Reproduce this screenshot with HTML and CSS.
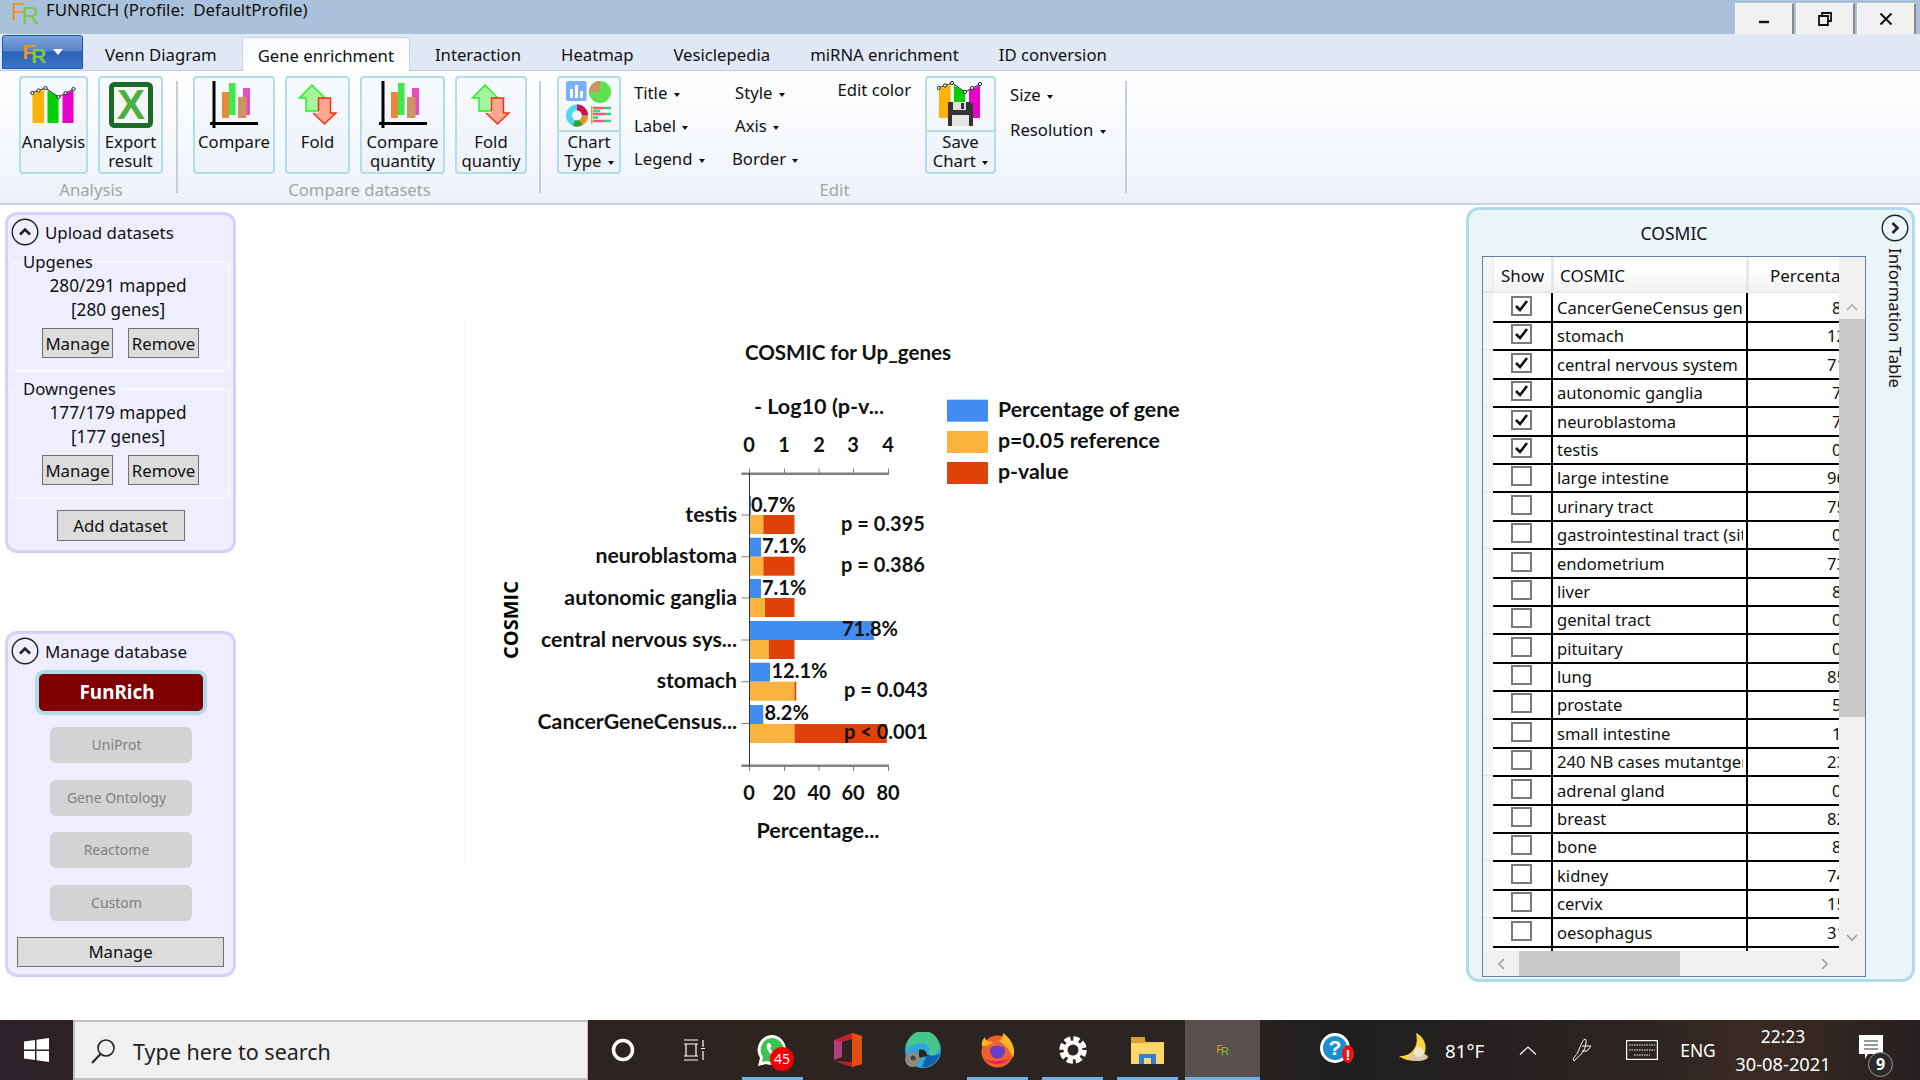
FILE: index.html
```html
<!DOCTYPE html>
<html>
<head>
  <title>FUNRICH</title>
  <link rel="stylesheet" href="styles.css">
</head>
<body>
  <!-- shared icons -->
  <svg class="defs">
    <symbol id="i-analysis" viewBox="0 0 46 38">
      <polygon points="2,8 13.6,3.5 13.6,37 2,37" fill="#ffb400"/>
      <polygon points="17,4.5 28,11 28,37 17,37" fill="#00d000"/>
      <polygon points="32,9.5 43,4 43,37 32,37" fill="#e600c8"/>
      <polyline points="1,7 15,2 28,11 43,3" fill="none" stroke="#222" stroke-width="1"/>
      <g fill="#fff" stroke="#222" stroke-width="1">
        <circle cx="1.8" cy="7" r="1.6"/><circle cx="8" cy="4.5" r="1.6"/><circle cx="15" cy="2" r="1.6"/>
        <circle cx="28" cy="11" r="1.6"/><circle cx="35" cy="7" r="1.6"/><circle cx="43" cy="3" r="1.6"/>
      </g>
    </symbol>
    <symbol id="i-compare" viewBox="0 0 50 48">
      <rect x="13" y="11" width="7" height="26" fill="#e88a3a"/>
      <rect x="20" y="2" width="6.5" height="32" fill="#3ee84a"/>
      <rect x="34" y="7" width="7" height="27" fill="#e64dc0"/>
      <rect x="29" y="16" width="8.5" height="21" fill="#cc9460"/>
      <path d="M5 0V47M1 42.5H49" fill="none" stroke="#000" stroke-width="3"/>
    </symbol>
    <symbol id="i-fold" viewBox="0 0 40 42">
      <polygon points="14,1 27,14 21,14 21,27 8,27 8,14 1.5,14" fill="#a5f5a0" stroke="#20ee20" stroke-width="1.4"/>
      <polygon points="20.5,14 32.5,14 32.5,29 38,29 26.5,40 15,29 20.5,29" fill="#ffa590"/>
      <path d="M20.5 27V14H32.5V29H38L26.5 40L15 29" fill="none" stroke="#f03010" stroke-width="1.4"/>
    </symbol>
  </svg>

  <div class="titlebar">
    <span class="fr fr-big"><span class="fr-f">F</span><span class="fr-r">R</span></span>
    <span class="title-text">FUNRICH (Profile:&nbsp; DefaultProfile)</span>
    <div class="win-btns">
      <div class="win-btn"><svg width="12" height="12" viewBox="0 0 12 12"><path d="M1 9H11" stroke="#111" stroke-width="2.4"/></svg></div>
      <div class="win-btn"><svg width="14" height="14" viewBox="0 0 14 14"><path d="M4 4V1H13V9H10M1 4H10V13H1Z" fill="none" stroke="#111" stroke-width="1.8"/></svg></div>
      <div class="win-btn"><svg width="14" height="14" viewBox="0 0 14 14"><path d="M1.5 1.5L12.5 12.5M12.5 1.5L1.5 12.5" stroke="#111" stroke-width="2"/></svg></div>
    </div>
  </div>

  <div class="tabbar">
    <div class="app-btn">
      <span class="fr fr-mid"><span class="fr-f">F</span><span class="fr-r">R</span></span>
      <span class="caret caret-white"></span>
    </div>
    <div class="tabs">
      <a class="tab">Venn Diagram</a>
      <a class="tab tab-active">Gene enrichment</a>
      <a class="tab">Interaction</a>
      <a class="tab">Heatmap</a>
      <a class="tab">Vesiclepedia</a>
      <a class="tab">miRNA enrichment</a>
      <a class="tab">ID conversion</a>
    </div>
  </div>

  <div class="ribbon">
    <div class="rgroup rgroup-analysis">
      <div class="rrow">
        <div class="rbtn w-analysis">
          <div class="rbtn-icon"><svg width="47" height="38"><use href="#i-analysis"/></svg></div>
          <div class="rbtn-text">Analysis</div>
        </div>
        <div class="rbtn w-export">
          <div class="rbtn-icon">
            <svg width="44" height="46" viewBox="0 0 44 46">
              <rect x="2.5" y="2.5" width="39" height="41" rx="3" fill="#f4f6f4" stroke="#1d6b2b" stroke-width="5"/>
              <text x="22" y="37" class="excel-x">X</text>
            </svg>
          </div>
          <div class="rbtn-text">Export<br>result</div>
        </div>
      </div>
      <div class="rlabel">Analysis</div>
    </div>
    <div class="rsep"></div>

    <div class="rgroup rgroup-compare">
      <div class="rrow">
        <div class="rbtn w-compare">
          <div class="rbtn-icon"><svg width="50" height="48"><use href="#i-compare"/></svg></div>
          <div class="rbtn-text">Compare</div>
        </div>
        <div class="rbtn w-fold">
          <div class="rbtn-icon"><svg width="40" height="42"><use href="#i-fold"/></svg></div>
          <div class="rbtn-text">Fold</div>
        </div>
        <div class="rbtn w-cquant">
          <div class="rbtn-icon"><svg width="50" height="48"><use href="#i-compare"/></svg></div>
          <div class="rbtn-text">Compare<br>quantity</div>
        </div>
        <div class="rbtn w-fquant">
          <div class="rbtn-icon"><svg width="40" height="42"><use href="#i-fold"/></svg></div>
          <div class="rbtn-text">Fold<br>quantiy</div>
        </div>
      </div>
      <div class="rlabel">Compare datasets</div>
    </div>
    <div class="rsep"></div>

    <div class="rgroup rgroup-edit">
      <div class="rrow">
        <div class="rbtn rbtn-split w-chart">
          <div class="rbtn-icon">
            <svg width="46" height="46" viewBox="0 0 46 46">
              <rect x="0" y="0" width="20.5" height="20" rx="2" fill="#7ab0f5"/>
              <path d="M4 17V8H7V17ZM9 17V4H12V17ZM14 17V10H17V17Z" fill="#fff"/>
              <circle cx="34" cy="11" r="11" fill="#5ee050"/>
              <path d="M34 11V0A11 11 0 0 0 23 11Z" fill="#cc9460"/>
              <circle cx="11" cy="34.5" r="8" fill="none" stroke="#4dd8f0" stroke-width="6"/>
              <path d="M11 26.5A8 8 0 0 1 19 34.5" fill="none" stroke="#d01050" stroke-width="6"/>
              <path d="M19 34.5A8 8 0 0 1 15 41.5" fill="none" stroke="#f09020" stroke-width="6"/>
              <path d="M15 41.5A8 8 0 0 1 8 42" fill="none" stroke="#30a030" stroke-width="6"/>
              <rect x="25" y="25" width="1.5" height="18" fill="#c8b020"/>
              <path d="M27 27H38M27 33H40M27 40H38" stroke="#e8607a" stroke-width="2.5"/>
              <path d="M38 27H45M40 33H45M38 40H45M27 30H34M27 36.5H32" stroke="#30d878" stroke-width="2.5"/>
            </svg>
          </div>
          <div class="rbtn-text">Chart<br>Type <span class="caret"></span></div>
        </div>
        <div class="menu-col col-a">
          <div class="menu-item">Title <span class="caret"></span></div>
          <div class="menu-item">Label <span class="caret"></span></div>
          <div class="menu-item">Legend <span class="caret"></span></div>
        </div>
        <div class="menu-col col-b">
          <div class="menu-item nudge">Style <span class="caret"></span></div>
          <div class="menu-item nudge">Axis <span class="caret"></span></div>
          <div class="menu-item">Border <span class="caret"></span></div>
        </div>
        <div class="edit-color">Edit color</div>
        <div class="rbtn rbtn-split w-save">
          <div class="rbtn-icon">
            <svg width="47" height="46" viewBox="0 0 47 46">
              <use href="#i-analysis" width="46" height="38" y="0"/>
              <path d="M11 21H33L36 24V45H11Z" fill="#333"/>
              <rect x="16" y="21" width="13" height="8" fill="#ddd"/>
              <rect x="24" y="22" width="3" height="6" fill="#333"/>
              <rect x="15" y="34" width="17" height="11" fill="#e6e6e6"/>
            </svg>
          </div>
          <div class="rbtn-text">Save<br>Chart <span class="caret"></span></div>
        </div>
        <div class="menu-col col-c">
          <div class="menu-item">Size <span class="caret"></span></div>
          <div class="menu-item">Resolution <span class="caret"></span></div>
        </div>
      </div>
      <div class="rlabel">Edit</div>
    </div>
    <div class="rsep"></div>
  </div>

  <div class="main">
    <div class="side">
      <div class="panel panel-upload">
        <div class="panel-head">
          <svg class="round-btn" width="28" height="28" viewBox="0 0 28 28"><circle cx="14" cy="14" r="12.8" fill="none" stroke="#222" stroke-width="1.4"/><path d="M9 16.5L14 11.5L19 16.5" fill="none" stroke="#222" stroke-width="2.6"/></svg>
          <span>Upload datasets</span>
        </div>
        <div class="group">
          <div class="group-title">Upgenes</div>
          <div class="group-line">280/291 mapped</div>
          <div class="group-line">[280 genes]</div>
          <div class="group-btns"><button class="btn btn-small">Manage</button><button class="btn btn-small">Remove</button></div>
        </div>
        <div class="group group-second">
          <div class="group-title">Downgenes</div>
          <div class="group-line">177/179 mapped</div>
          <div class="group-line">[177 genes]</div>
          <div class="group-btns"><button class="btn btn-small">Manage</button><button class="btn btn-small">Remove</button></div>
        </div>
        <button class="btn btn-add">Add dataset</button>
      </div>

      <div class="panel panel-db">
        <div class="panel-head">
          <svg class="round-btn" width="28" height="28" viewBox="0 0 28 28"><circle cx="14" cy="14" r="12.8" fill="none" stroke="#222" stroke-width="1.4"/><path d="M9 16.5L14 11.5L19 16.5" fill="none" stroke="#222" stroke-width="2.6"/></svg>
          <span>Manage database</span>
        </div>
        <div class="db-active">FunRich</div>
        <div class="db-off">UniProt</div>
        <div class="db-off">Gene Ontology</div>
        <div class="db-off">Reactome</div>
        <div class="db-off">Custom</div>
        <button class="btn btn-manage">Manage</button>
      </div>
    </div>

    <div class="chart-area">
      <svg class="chart" width="1231" height="815" viewBox="235 205 1231 815">
        <line x1="465" y1="320" x2="465" y2="865" stroke="#f2f2f2" stroke-width="1"/>

        <text x="848" y="360" class="ct ct-mid ct-title">COSMIC for Up_genes</text>
        <text x="819" y="414" class="ct ct-mid ct-axis">- Log10 (p-v...</text>

        <g class="ct ct-mid">
          <text x="749" y="452">0</text><text x="784" y="452">1</text><text x="819" y="452">2</text><text x="853" y="452">3</text><text x="888" y="452">4</text>
          <text x="749" y="800">0</text><text x="784" y="800">20</text><text x="819" y="800">40</text><text x="853" y="800">60</text><text x="888" y="800">80</text>
        </g>
        <text x="818" y="838" class="ct ct-mid ct-axis">Percentage...</text>

        <!-- bars -->
        <g fill="#418cf0">
          <rect x="749.5" y="496" width="1.5" height="19"/>
          <rect x="749.5" y="537.7" width="11.5" height="19"/>
          <rect x="749.5" y="579" width="11.5" height="19"/>
          <rect x="749.5" y="621" width="124.5" height="19"/>
          <rect x="749.5" y="662.7" width="20.5" height="19"/>
          <rect x="749.5" y="705" width="13.8" height="19"/>
        </g>
        <g fill="#fbb33f">
          <rect x="749.5" y="515" width="13.8" height="19"/>
          <rect x="749.5" y="556.7" width="13.8" height="19"/>
          <rect x="749.5" y="598" width="15.5" height="19"/>
          <rect x="749.5" y="640" width="19.3" height="19"/>
          <rect x="749.5" y="681.7" width="45" height="19"/>
          <rect x="749.5" y="724" width="45" height="19"/>
        </g>
        <g fill="#e0400a">
          <rect x="763.3" y="515" width="31.2" height="19"/>
          <rect x="763.3" y="556.7" width="31.2" height="19"/>
          <rect x="765" y="598" width="29.5" height="19"/>
          <rect x="768.8" y="640" width="25.7" height="19"/>
          <rect x="794.5" y="681.7" width="1.8" height="19"/>
          <rect x="794.5" y="724" width="92.3" height="19"/>
        </g>

        <!-- axes -->
        <g stroke="#808080" fill="none">
          <path d="M741.5 473.7H889M741.5 765.7H889" stroke-width="2.4"/>
          <path d="M749.5 468.5V473M784.5 468.5V473M819 468.5V473M853.5 468.5V473M888.5 468.5V473" stroke-width="1"/>
          <path d="M749.5 766V771M784.5 766V771M819 766V771M853.5 766V771M888.5 766V771" stroke-width="1"/>
          <path d="M741.5 515H749M741.5 556.7H749M741.5 598H749M741.5 640H749M741.5 681.7H749M741.5 723.5H749" stroke-width="1"/>
        </g>
        <line x1="749.5" y1="473" x2="749.5" y2="766" stroke="#333" stroke-width="1"/>

        <g class="ct ct-end ct-lab">
          <text x="737" y="522">testis</text>
          <text x="737" y="563">neuroblastoma</text>
          <text x="737" y="605">autonomic ganglia</text>
          <text x="737" y="647">central nervous sys...</text>
          <text x="737" y="688">stomach</text>
          <text x="737" y="729">CancerGeneCensus...</text>
        </g>

        <g class="ct">
          <text x="751" y="512">0.7%</text>
          <text x="762" y="553">7.1%</text>
          <text x="762" y="595">7.1%</text>
          <text x="842" y="636">71.8%</text>
          <text x="771.5" y="678">12.1%</text>
          <text x="764.5" y="720">8.2%</text>
          <text x="841" y="531">p = 0.395</text>
          <text x="841" y="572">p = 0.386</text>
          <text x="844" y="697">p = 0.043</text>
          <text x="844" y="739">p &lt; 0.001</text>
        </g>

        <text x="510" y="620" class="ct-side" transform="rotate(-90 510 620)">COSMIC</text>

        <rect x="947" y="399.7" width="41" height="22" fill="#418cf0"/>
        <rect x="947" y="431" width="41" height="22" fill="#fbb33f"/>
        <rect x="947" y="462" width="41" height="22" fill="#e0400a"/>
        <g class="ct ct-lab">
          <text x="998" y="417">Percentage of gene</text>
          <text x="998" y="448">p=0.05 reference</text>
          <text x="998" y="479">p-value</text>
        </g>
      </svg>
    </div>

    <div class="info-panel">
      <div class="info-body">
        <div class="info-title">COSMIC</div>
        <div class="table">
          <div class="table-main">
            <div class="cols">
              <div class="row head">
                <div class="gutter"></div>
                <div class="hcell hcell-show">Show</div>
                <div class="hcell hcell-name">COSMIC</div>
                <div class="hcell hcell-pct">Percentage</div>
              </div>
              <div class="rows">
                <div class="row"><div class="gutter"></div><div class="c-show"><span class="check on"></span></div><div class="c-name"><div>CancerGeneCensus genes</div></div><div class="c-pct one">8.2</div></div>
                <div class="row"><div class="gutter"></div><div class="c-show"><span class="check on"></span></div><div class="c-name"><div>stomach</div></div><div class="c-pct">12.1</div></div>
                <div class="row"><div class="gutter"></div><div class="c-show"><span class="check on"></span></div><div class="c-name"><div>central nervous system</div></div><div class="c-pct">71.8</div></div>
                <div class="row"><div class="gutter"></div><div class="c-show"><span class="check on"></span></div><div class="c-name"><div>autonomic ganglia</div></div><div class="c-pct one">7.1</div></div>
                <div class="row"><div class="gutter"></div><div class="c-show"><span class="check on"></span></div><div class="c-name"><div>neuroblastoma</div></div><div class="c-pct one">7.1</div></div>
                <div class="row"><div class="gutter"></div><div class="c-show"><span class="check on"></span></div><div class="c-name"><div>testis</div></div><div class="c-pct one">0.7</div></div>
                <div class="row"><div class="gutter"></div><div class="c-show"><span class="check"></span></div><div class="c-name"><div>large intestine</div></div><div class="c-pct">96</div></div>
                <div class="row"><div class="gutter"></div><div class="c-show"><span class="check"></span></div><div class="c-name"><div>urinary tract</div></div><div class="c-pct">75</div></div>
                <div class="row"><div class="gutter"></div><div class="c-show"><span class="check"></span></div><div class="c-name"><div>gastrointestinal tract (site)</div></div><div class="c-pct one">0</div></div>
                <div class="row"><div class="gutter"></div><div class="c-show"><span class="check"></span></div><div class="c-name"><div>endometrium</div></div><div class="c-pct">73</div></div>
                <div class="row"><div class="gutter"></div><div class="c-show"><span class="check"></span></div><div class="c-name"><div>liver</div></div><div class="c-pct one">8</div></div>
                <div class="row"><div class="gutter"></div><div class="c-show"><span class="check"></span></div><div class="c-name"><div>genital tract</div></div><div class="c-pct one">0</div></div>
                <div class="row"><div class="gutter"></div><div class="c-show"><span class="check"></span></div><div class="c-name"><div>pituitary</div></div><div class="c-pct one">0</div></div>
                <div class="row"><div class="gutter"></div><div class="c-show"><span class="check"></span></div><div class="c-name"><div>lung</div></div><div class="c-pct">85</div></div>
                <div class="row"><div class="gutter"></div><div class="c-show"><span class="check"></span></div><div class="c-name"><div>prostate</div></div><div class="c-pct one">5</div></div>
                <div class="row"><div class="gutter"></div><div class="c-show"><span class="check"></span></div><div class="c-name"><div>small intestine</div></div><div class="c-pct one">1</div></div>
                <div class="row"><div class="gutter"></div><div class="c-show"><span class="check"></span></div><div class="c-name"><div>240 NB cases mutantgenes</div></div><div class="c-pct">23</div></div>
                <div class="row"><div class="gutter"></div><div class="c-show"><span class="check"></span></div><div class="c-name"><div>adrenal gland</div></div><div class="c-pct one">0</div></div>
                <div class="row"><div class="gutter"></div><div class="c-show"><span class="check"></span></div><div class="c-name"><div>breast</div></div><div class="c-pct">82</div></div>
                <div class="row"><div class="gutter"></div><div class="c-show"><span class="check"></span></div><div class="c-name"><div>bone</div></div><div class="c-pct one">8</div></div>
                <div class="row"><div class="gutter"></div><div class="c-show"><span class="check"></span></div><div class="c-name"><div>kidney</div></div><div class="c-pct">74</div></div>
                <div class="row"><div class="gutter"></div><div class="c-show"><span class="check"></span></div><div class="c-name"><div>cervix</div></div><div class="c-pct">15</div></div>
                <div class="row"><div class="gutter"></div><div class="c-show"><span class="check"></span></div><div class="c-name"><div>oesophagus</div></div><div class="c-pct">31</div></div>
                <div class="row"><div class="gutter"></div><div class="c-show"></div><div class="c-name"></div><div class="c-pct"></div></div>
              </div>
            </div>
            <div class="vbar">
              <div class="vbar-top"><svg width="12" height="8" viewBox="0 0 12 8"><path d="M1 7L6 2L11 7" fill="none" stroke="#b0b0b0" stroke-width="1.6"/></svg></div>
              <div class="vbar-thumb"></div>
              <div class="vbar-end"><svg width="12" height="8" viewBox="0 0 12 8"><path d="M1 1L6 6L11 1" fill="none" stroke="#a0a0a0" stroke-width="1.6"/></svg></div>
            </div>
          </div>
          <div class="hbar">
            <div class="hbar-start"><svg width="8" height="12" viewBox="0 0 8 12"><path d="M7 1L2 6L7 11" fill="none" stroke="#a0a0a0" stroke-width="1.6"/></svg></div>
            <div class="hbar-thumb"></div>
            <div class="hbar-end"><svg width="8" height="12" viewBox="0 0 8 12"><path d="M1 1L6 6L1 11" fill="none" stroke="#a0a0a0" stroke-width="1.6"/></svg></div>
          </div>
        </div>
      </div>
      <div class="info-rail">
        <svg width="28" height="28" viewBox="0 0 28 28"><circle cx="14" cy="14" r="12.8" fill="none" stroke="#222" stroke-width="1.4"/><path d="M11.5 9L16.5 14L11.5 19" fill="none" stroke="#222" stroke-width="2.6"/></svg>
        <div class="rail-text">Information Table</div>
      </div>
    </div>
  </div>

  <div class="taskbar">
    <div class="start">
      <svg width="25" height="24" viewBox="0 0 25 24"><path d="M0 3.5L11 2V11.5H0ZM12.5 1.8L25 0V11.5H12.5ZM0 13H11V22L0 20.5ZM12.5 13H25V24L12.5 22.3Z" fill="#fff"/></svg>
    </div>
    <div class="search">
      <svg width="26" height="26" viewBox="0 0 26 26"><circle cx="16" cy="10" r="8" fill="none" stroke="#222" stroke-width="1.6"/><path d="M10.5 16L2 25" stroke="#222" stroke-width="2"/></svg>
      <span>Type here to search</span>
    </div>
    <div class="sys-btn sys-cortana">
      <svg width="24" height="24" viewBox="0 0 24 24"><circle cx="12" cy="12" r="9.5" fill="none" stroke="#fff" stroke-width="3.5"/></svg>
    </div>
    <div class="sys-btn sys-view">
      <svg width="25" height="22" viewBox="0 0 25 22"><path d="M1 1H15M1 5H15M3 5V17M13 5V17M1 17H15M1 21H15M20 1V8M20 12V21M18 9.5H22" fill="none" stroke="#fff" stroke-width="1.2"/></svg>
    </div>
    <div class="app app-first on">
      <svg width="32" height="33" viewBox="0 0 32 33"><path d="M16 1A15 15 0 0 0 3 24L1 32L9 30A15 15 0 1 0 16 1Z" fill="#fff"/><path d="M16 4A12 12 0 0 0 6 23L5 28L10 27A12 12 0 1 0 16 4Z" fill="#3fc350"/><path d="M11 9C9 11 9 14 12 18C15 22 19 23 22 21L22 18L18.5 16.5L17 18C15 17 13.5 15.5 13 14L14.5 12.5L13 9Z" fill="#fff"/></svg>
      <span class="wa-badge">45</span>
    </div>
    <div class="app">
      <svg width="28" height="34" viewBox="0 0 28 34"><polygon points="0,7 18,0 28,3 28,31 18,34 0,28 18,29 18,6 8,9 8,24 0,27" fill="#c0202c"/><polygon points="18,0 28,3 28,31 18,34" fill="#e0500a"/><polygon points="0,7 8,9 8,24 0,27" fill="#b04080"/></svg>
    </div>
    <div class="app">
      <svg width="36" height="36" viewBox="0 0 36 36"><circle cx="18" cy="18" r="18" fill="#2fa8d8"/><path d="M2 18A16 16 0 0 1 34 12C36 22 26 25 22 22C27 19 24 10 15 11C9 12 4 14 2 18Z" fill="#46c58c"/><path d="M22 22C26 25 32 24 35 21C33 31 24 36 17 35Z" fill="#1060b0"/><path d="M14 18C20 16 22 21 22 24L14 26Z" fill="#2b2420"/><circle cx="7.5" cy="27.5" r="7.5" fill="#8f8a82"/><circle cx="8" cy="26" r="2.5" fill="#444"/></svg>
    </div>
    <div class="app on">
      <svg width="35" height="35" viewBox="0 0 35 35"><circle cx="17.5" cy="18.5" r="16" fill="#f2612a"/><path d="M23 0C33 7 36 17 33 25C29 14 22 10 19 8C22 6 23 4 23 0Z" fill="#fdb32b"/><path d="M2 13C1 8 4 5 5 4C5 8 9 9 14 9C9 12 5 14 2 13Z" fill="#fdb32b"/><path d="M5 26C10 33 26 33 31 24C27 28 14 30 5 26Z" fill="#e0246a"/><circle cx="17.5" cy="18" r="7.5" fill="#6a3ec8"/><path d="M10 14C13 10 20 10 24 14C20 12 14 12 10 14Z" fill="#f7882a"/></svg>
    </div>
    <div class="app on">
      <svg width="28" height="28" viewBox="0 0 28 28"><circle cx="14" cy="14" r="7.5" fill="none" stroke="#fff" stroke-width="4"/><circle cx="14" cy="14" r="11.5" fill="none" stroke="#fff" stroke-width="4.5" stroke-dasharray="6.2 2.83"/></svg>
    </div>
    <div class="app on">
      <svg width="33" height="27" viewBox="0 0 33 27"><path d="M0 2H13L15 5H33V27H0Z" fill="#f0c04a"/><rect x="0" y="0" width="14" height="6" fill="#d9a030"/><rect x="0" y="6" width="33" height="21" fill="#fad766"/><path d="M8 27V17H25V27H20V21H13V27Z" fill="#2f7fd8"/></svg>
    </div>
    <div class="app app-active">
      <span class="fr fr-small"><span class="fr-f">F</span><span class="fr-r">R</span></span>
    </div>

    <div class="tray">
      <div class="t-help">
        <svg width="35" height="32" viewBox="0 0 35 32"><circle cx="15" cy="16" r="15" fill="#fff"/><circle cx="15" cy="16" r="12" fill="#1a90cf"/><text x="15" y="23" class="help-q">?</text><ellipse cx="28" cy="22" rx="6" ry="9" fill="#f01010"/><text x="28" y="28" class="help-x">!</text></svg>
      </div>
      <div class="t-moon">
        <svg width="35" height="30" viewBox="0 0 35 30"><path d="M18 0C30 5 31 23 20 27C12 29 5 26 1 23C10 24 22 17 18 0Z" fill="#f8d838"/><ellipse cx="20" cy="24" rx="10" ry="4" fill="#d8c8a8"/><circle cx="21" cy="19" r="5" fill="#efe6c8"/></svg>
      </div>
      <div class="t-temp">81°F</div>
      <div class="t-icon t-chev"><svg width="18" height="9" viewBox="0 0 18 9"><path d="M1 8.5L9 1L17 8.5" fill="none" stroke="#fff" stroke-width="1.2"/></svg></div>
      <div class="t-icon t-pen"><svg width="20" height="24" viewBox="0 0 20 24"><path d="M2 23C0 20 4 18 6 14C8 9 11 1 13 1C15 1 14 8 12 12C10 16 6 19 2 23ZM10 8H19L15 13H10" fill="none" stroke="#fff" stroke-width="1"/></svg></div>
      <div class="t-icon t-kbd"><svg width="32" height="20" viewBox="0 0 32 20"><rect x=".6" y=".6" width="30.8" height="18.8" fill="none" stroke="#fff" stroke-width="1.2"/><path d="M3 5H29M3 10H29M8 15H24" stroke="#fff" stroke-width="1.2" stroke-dasharray="1.5 1"/></svg></div>
      <div class="t-lang">ENG</div>
      <div class="t-clock"><div>22:23</div><div class="t-date">30-08-2021</div></div>
      <div class="t-notif">
        <svg width="26" height="27" viewBox="0 0 26 27"><path d="M1 1H25V20H10L7 25V20H1Z" fill="#fff"/><path d="M6 7H20M6 11H20M6 15H20" stroke="#333" stroke-width="1.2"/></svg>
        <span class="notif-badge">9</span>
      </div>
    </div>
  </div>
</body>
</html>
```

FILE: styles.css
```css
* {
  box-sizing: border-box;
}

html, body {
  margin: 0;
  padding: 0;
}

body {
  width: 1920px;
  height: 1080px;
  overflow: hidden;
  display: flex;
  flex-direction: column;
  background-color: #FFFFFF;
  color: #111111;
  font-family: "Noto Sans", sans-serif;
  font-size: 16.7px;
}

.defs {
  display: none;
}

/* logo letters */
.fr {
  display: inline-flex;
  font-family: "Liberation Sans", sans-serif;
}

.fr-f {
  color: #f0902a;
}

.fr-r {
  color: #7cc83c;
  margin-left: -4px;
  position: relative;
  top: 4px;
}

.fr-big {
  font-size: 24px;
  margin-left: 11px;
  line-height: 24px;
  width: 35px;
}

.fr-mid {
  font-size: 21px;
  line-height: 22px;
  font-weight: bold;
}

.fr-small {
  font-size: 11px;
  line-height: 12px;
}

.fr-small .fr-r {
  margin-left: -2px;
  top: 2px;
}

.caret {
  display: inline-block;
  width: 0;
  height: 0;
  border-left: 3.5px solid transparent;
  border-right: 3.5px solid transparent;
  border-top: 4px solid #111111;
  vertical-align: middle;
  margin-left: 2px;
}

.caret-white {
  border-left-width: 5px;
  border-right-width: 5px;
  border-top: 6px solid #FFFFFF;
  margin-left: 6px;
}

/* title bar */
.titlebar {
  height: 34px;
  flex: none;
  display: flex;
  background-color: #a9c1db;
}

.title-text {
  font-size: 16.9px;
  line-height: 20px;
}

.win-btns {
  margin-left: auto;
  display: flex;
  align-items: flex-end;
  gap: 2px;
  padding-right: 4px;
}

.win-btn {
  width: 59px;
  height: 31px;
  display: flex;
  align-items: center;
  justify-content: center;
  background-color: #f0f0f0;
  border-top: 1px solid #fafafa;
  border-left: 1px solid #fafafa;
  border-right: 2px solid #8a8a8a;
}

/* tabs */
.tabbar {
  height: 37px;
  flex: none;
  display: flex;
  padding-left: 2px;
  background-color: #dfe8f4;
  border-bottom: 1px solid #b9cde2;
}

.app-btn {
  width: 81px;
  height: 34px;
  margin-top: 1px;
  display: flex;
  align-items: center;
  justify-content: center;
  border: 1px solid #1a58b8;
  border-radius: 3px 3px 0 0;
  background: linear-gradient(#7fa2d8, #5a85c8 45%, #2a62b8 50%, #3a74c8);
}

.tabs {
  display: flex;
  margin-left: 2px;
}

.tab {
  padding: 11px 20px 0;
  height: 37px;
  line-height: 20px;
  white-space: nowrap;
}

.tab-active {
  margin: 3px 5px 0;
  padding: 8px 15px 0;
  height: 35px;
  background: linear-gradient(#f8fbfe, #FFFFFF);
  border: 1px solid #c3d7e8;
  border-bottom: none;
  border-radius: 4px 4px 0 0;
}

/* ribbon */
.ribbon {
  height: 134px;
  flex: none;
  display: flex;
  background: linear-gradient(#FFFFFF, #edf2f9);
  border-bottom: 2px solid #c5d3e4;
}

.rgroup {
  display: flex;
  flex-direction: column;
  padding-top: 5px;
}

.rgroup-analysis {
  width: 176px;
  padding-left: 19px;
}

.rgroup-compare {
  width: 361px;
  padding-left: 15px;
}

.rgroup-edit {
  width: 584px;
  padding-left: 16px;
}

.rrow {
  height: 98px;
  display: flex;
  gap: 10px;
}

.rlabel {
  margin: 6px 0 0 -13px;
  text-align: center;
  line-height: 20px;
  color: #a4a4a4;
}

.rsep {
  width: 2px;
  height: 112px;
  margin-top: 10px;
  background-color: #c3cfdd;
}

.rbtn {
  height: 98px;
  flex: none;
  border: 2px solid #b3dde8;
  border-radius: 4px;
  background: linear-gradient(#f7fafd, #edf2f9);
  text-align: center;
}

.rbtn-icon {
  height: 54px;
  display: flex;
  align-items: center;
  justify-content: center;
}

.rbtn-split .rbtn-icon {
  border-bottom: 2px solid #b3dde8;
}

.rbtn-text {
  line-height: 19px;
}

.w-analysis { width: 69px; }
.w-export { width: 65px; }
.w-compare { width: 82px; }
.w-fold { width: 65px; }
.w-cquant { width: 85px; }
.w-fquant { width: 72px; }
.w-chart { width: 64px; }
.w-save { width: 71px; }

.excel-x {
  font-family: "Liberation Sans", sans-serif;
  font-size: 42px;
  font-weight: bold;
  text-anchor: middle;
  fill: #4caf3f;
}

.menu-col {
  flex: none;
}

.col-a {
  width: 98px;
  margin-left: 3px;
}

.col-b {
  width: 107px;
  margin-left: -10px;
}

.col-c {
  margin-left: 4px;
  padding-top: 1px;
}

.menu-item {
  height: 33px;
  line-height: 33px;
  white-space: nowrap;
}

.col-c .menu-item {
  height: 35px;
  line-height: 35px;
}

.nudge {
  padding-left: 3px;
}

.edit-color {
  width: 86px;
  margin-left: -11.5px;
  margin-right: -8.5px;
  padding-top: 4px;
  line-height: 20px;
  white-space: nowrap;
}

/* main area */
.main {
  height: 815px;
  flex: none;
  display: flex;
}

.side {
  width: 235px;
  flex: none;
  padding: 7px 0 0 5px;
  display: flex;
  flex-direction: column;
  gap: 78px;
}

.panel {
  width: 231px;
  background-color: #eeeeff;
  border: 3px solid #d2d2fb;
  border-radius: 12px;
}

.panel-upload {
  height: 341px;
}

.panel-db {
  height: 346px;
}

.panel-head {
  height: 34px;
  display: flex;
  align-items: center;
  gap: 6px;
  padding-left: 3px;
  font-size: 16.9px;
}

.round-btn {
  flex: none;
}

.group {
  height: 111px;
  margin: 12px 3px 0;
  border: 2px solid #f6f6fc;
  border-radius: 5px;
  text-align: center;
}

.group-second {
  margin-top: 16px;
}

.group-title {
  width: fit-content;
  height: 22.5px;
  margin: -11.5px 0 0 8px;
  padding: 0 3px 0 2px;
  line-height: 20px;
  background-color: #eeeeff;
}

.group-line {
  height: 24px;
  padding-right: 5px;
  line-height: 24px;
  font-size: 17.2px;
}

.group-btns {
  display: flex;
  justify-content: center;
  gap: 15px;
  margin-top: 6px;
}

.btn {
  display: block;
  padding: 0;
  font-family: "Noto Sans", sans-serif;
  font-size: 16.8px;
  color: #111111;
  background-color: #dcdcdc;
  border: 1px solid #707070;
}

.btn-small {
  width: 71px;
  height: 30px;
}

.btn-add {
  width: 128px;
  height: 31px;
  margin: 11px auto 0;
}

.db-active {
  width: 172px;
  height: 45px;
  margin: 2px auto 0;
  padding-right: 7px;
  border: 4px solid #afdcea;
  border-radius: 9px;
  background-color: #800000;
  color: #FFFFFF;
  font-size: 18.9px;
  font-weight: bold;
  line-height: 36px;
  text-align: center;
}

.db-off {
  width: 142px;
  height: 36px;
  margin: 16.5px auto 0;
  padding-right: 8px;
  border-radius: 6px;
  background-color: #d3d3d3;
  color: #808080;
  font-size: 14px;
  line-height: 35px;
  text-align: center;
}

.db-active + .db-off {
  margin-top: 12px;
}

.btn-manage {
  width: 207px;
  height: 30px;
  margin: 16px auto 0;
}

/* chart */
.chart-area {
  width: 1231px;
  flex: none;
}

.chart {
  display: block;
}

.ct {
  font-family: Lato, sans-serif;
  font-size: 20px;
  font-weight: bold;
  fill: #111111;
}

.ct-title {
  font-size: 20.6px;
}

.ct-axis {
  font-size: 21.6px;
}

.ct-lab {
  font-size: 21.3px;
}

.ct-mid {
  text-anchor: middle;
}

.ct-end {
  text-anchor: end;
}

.ct-side {
  font-family: "Open Sans", sans-serif;
  font-size: 20px;
  font-weight: bold;
  text-anchor: middle;
  dominant-baseline: central;
}

/* right hand table */
.info-panel {
  width: 449px;
  height: 775px;
  margin-top: 2px;
  flex: none;
  display: flex;
  background-color: #ebf4f7;
  border: 3px solid #afdcea;
  border-radius: 13px;
}

.info-body {
  width: 397px;
  flex: none;
  padding-left: 13px;
  display: flex;
  flex-direction: column;
}

.info-title {
  height: 46px;
  flex: none;
  text-align: center;
  line-height: 46px;
  font-size: 17.5px;
}

.table {
  height: 721px;
  flex: none;
  display: flex;
  flex-direction: column;
  border: 1px solid #5b82a8;
  background-color: #FFFFFF;
}

.table-main {
  height: 694px;
  flex: none;
  display: flex;
  overflow: hidden;
}

.cols {
  width: 356px;
  flex: none;
}

.row {
  display: grid;
  grid-template-columns: 10px 60px 195px 91px;
  height: 28.4px;
  font-size: 16.6px;
}

.head {
  height: 36px;
  background: linear-gradient(#FFFFFF 40%, #f0f0f0);
}

.rows {
  height: 658px;
  overflow: hidden;
}

.gutter {
  background-color: #f4f4f4;
  border-bottom: 2px solid #e2e2e2;
}

.hcell {
  line-height: 38px;
  font-size: 17px;
  border-left: 1px solid #e8e8e8;
  border-right: 2px solid #e8e8e8;
  border-bottom: 1px solid #e0e0e0;
  white-space: nowrap;
  overflow: hidden;
}

.hcell-show {
  text-align: center;
}

.hcell-name {
  padding-left: 6px;
}

.hcell-pct {
  padding-left: 21px;
  border-right: none;
}

.c-show {
  border-bottom: 2px solid #000000;
  border-right: 2px solid #000000;
  padding: 3px 0 0 18px;
}

.check {
  display: block;
  width: 21px;
  height: 20px;
  border: 2px solid #7a7a7a;
  background-color: #FFFFFF;
}

.check.on {
  background: #FFFFFF url("data:image/svg+xml,%3Csvg xmlns='http://www.w3.org/2000/svg' viewBox='0 0 17 16'%3E%3Cpath d='M3 8L7 12L14 3' fill='none' stroke='%23111' stroke-width='2.6'/%3E%3C/svg%3E") center / 100% 100% no-repeat;
}

.c-name {
  border-bottom: 2px solid #000000;
  border-right: 2px solid #000000;
  padding: 1px 3px 0 4px;
  line-height: 27px;
}

.c-name div {
  overflow: hidden;
  white-space: nowrap;
}

.c-pct {
  border-bottom: 2px solid #000000;
  padding: 1px 0 0 79px;
  line-height: 27px;
  white-space: nowrap;
  overflow: hidden;
}

.c-pct.one {
  padding-left: 84px;
}

.vbar {
  flex: 1;
  display: flex;
  flex-direction: column;
  background-color: #f0f0f0;
}

.vbar-top {
  height: 62px;
  flex: none;
  display: flex;
  align-items: flex-end;
  justify-content: center;
  padding-bottom: 8px;
}

.vbar-thumb {
  height: 398px;
  flex: none;
  background-color: #c8c8c8;
}

.vbar-end {
  flex: 1;
  display: flex;
  align-items: flex-end;
  justify-content: center;
  padding-bottom: 9px;
}

.hbar {
  flex: 1;
  display: flex;
  background-color: #f0f0f0;
}

.hbar-start {
  width: 36px;
  flex: none;
  display: flex;
  align-items: center;
  justify-content: center;
}

.hbar-thumb {
  width: 161px;
  flex: none;
  background-color: #c8c8c8;
}

.hbar-end {
  flex: 1;
  display: flex;
  align-items: center;
  justify-content: flex-end;
  padding-right: 36px;
}

.info-rail {
  flex: 1;
  padding: 4px 0 0 15px;
}

.info-rail svg {
  display: block;
}

.rail-text {
  margin: 6px 0 0 3px;
  writing-mode: vertical-rl;
  line-height: 22px;
  white-space: nowrap;
}

/* taskbar */
.taskbar {
  height: 60px;
  flex: none;
  display: flex;
  background: linear-gradient(90deg, #2e2028, #2d2420 40%, #2b2521 62%, #1f1e1e 70%, #2b2422 85%, #3a2a24 92%, #262020);
  color: #FFFFFF;
}

.start {
  width: 73px;
  display: flex;
  align-items: center;
  justify-content: center;
}

.search {
  width: 515px;
  display: flex;
  align-items: center;
  gap: 17px;
  padding: 2px 0 0 15px;
  background-color: #f0f0f0;
  border: 2px solid #c0c0c0;
  border-right-width: 1px;
  color: #222222;
  font-size: 21.5px;
}

.sys-btn {
  display: flex;
  align-items: center;
  justify-content: center;
}

.sys-cortana {
  width: 70px;
}

.sys-view {
  width: 74px;
}

.app {
  width: 75px;
  display: flex;
  align-items: center;
  justify-content: center;
  position: relative;
}

.app-first {
  margin-left: 3px;
}

.app.on::after {
  content: "";
  position: absolute;
  left: 7px;
  right: 7px;
  bottom: 0;
  height: 3px;
  background-color: #6fb0e6;
}

.app-active {
  background-color: #5a5050;
  border-bottom: 3px solid #6fb0e6;
}

.wa-badge {
  position: absolute;
  left: 35px;
  top: 27px;
  width: 24px;
  height: 24px;
  border-radius: 50%;
  background-color: #f00000;
  font-size: 14px;
  line-height: 24px;
  text-align: center;
}

.tray {
  flex: 1;
  display: flex;
  padding-left: 40px;
  align-items: center;
}

.t-help {
  width: 75px;
  padding-left: 20px;
}

.help-q {
  font-family: "Liberation Sans", sans-serif;
  font-size: 21px;
  font-weight: bold;
  text-anchor: middle;
  fill: #FFFFFF;
}

.help-x {
  font-family: "Liberation Sans", sans-serif;
  font-size: 15px;
  font-weight: bold;
  text-anchor: middle;
  fill: #FFFFFF;
}

.t-moon {
  width: 70px;
  padding-left: 23px;
}

.t-temp {
  width: 60px;
  font-size: 18.7px;
}

.t-icon {
  display: flex;
  justify-content: center;
}

.t-chev { width: 46px; }
.t-pen { width: 62px; }
.t-kbd { width: 58px; }

.t-lang {
  width: 54px;
  text-align: center;
  font-size: 17.4px;
}

.t-clock {
  width: 116px;
  text-align: center;
  line-height: 28px;
  font-size: 17.4px;
}

.t-date {
  font-size: 18.3px;
}

.t-notif {
  width: 59px;
  padding-left: 17px;
  position: relative;
}

.notif-badge {
  position: absolute;
  left: 27px;
  top: 18px;
  width: 25px;
  height: 25px;
  border: 1px solid #999999;
  border-radius: 50%;
  background-color: #2a2a2a;
  font-size: 16px;
  font-weight: bold;
  line-height: 23px;
  text-align: center;
}
```
